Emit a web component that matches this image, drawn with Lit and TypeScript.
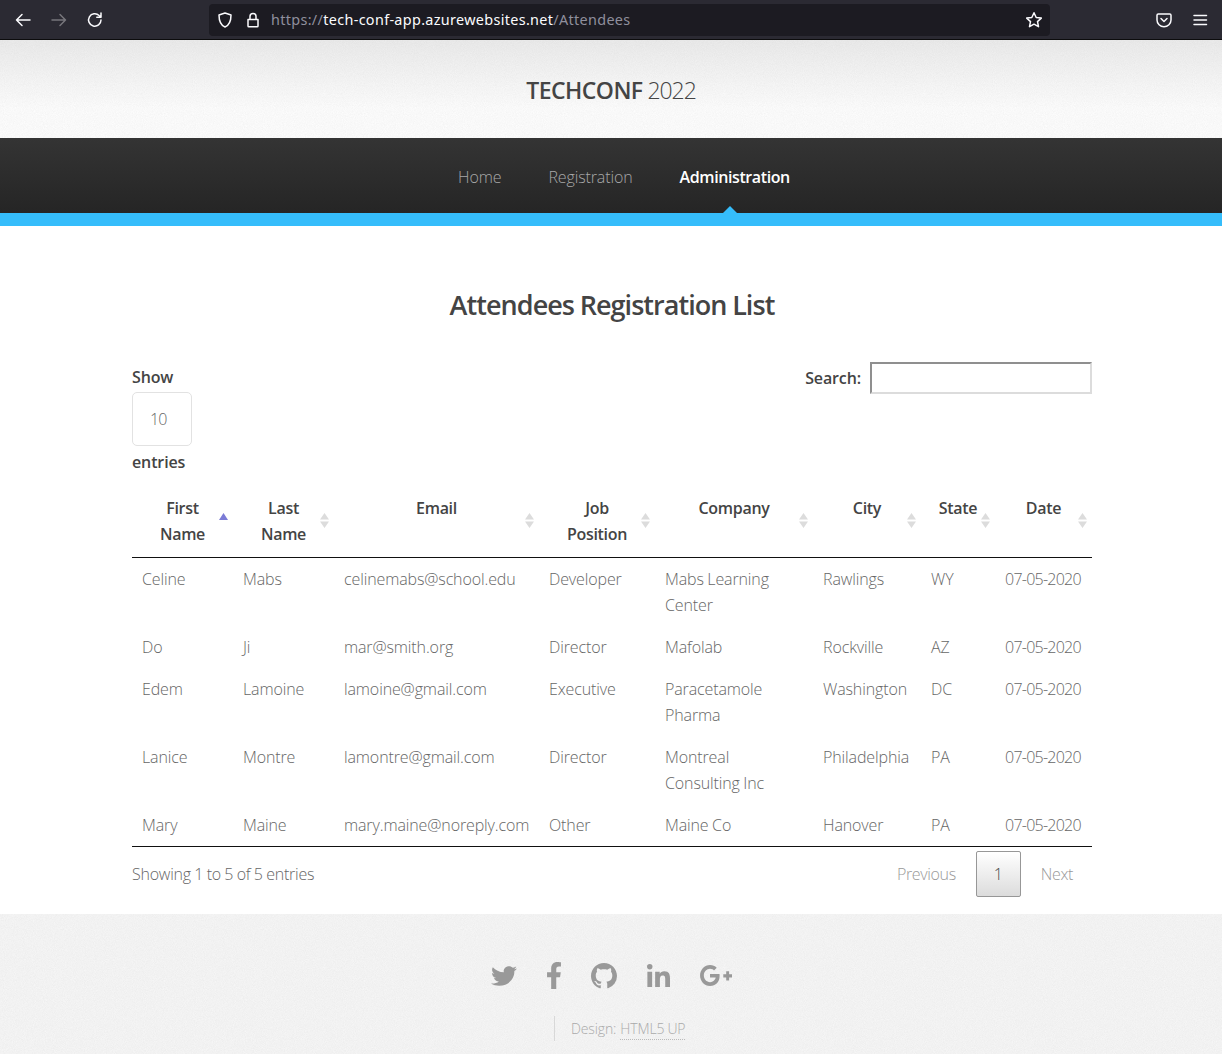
import { LitElement, html, css, svg } from 'lit'
import { customElement } from 'lit/decorators.js'

const noise =
    "url(\"data:image/svg+xml,%3Csvg xmlns='http://www.w3.org/2000/svg' width='200' height='200'%3E%3Cfilter id='n'%3E%3CfeTurbulence type='fractalNoise' baseFrequency='1.1' numOctaves='2' stitchTiles='stitch'/%3E%3CfeColorMatrix values='0 0 0 0 0 0 0 0 0 0 0 0 0 0 0 0 0 0 .05 0'/%3E%3C/filter%3E%3Crect width='200' height='200' filter='url(%23n)'/%3E%3C/svg%3E\")"

const columns = [
    { label: ['First', 'Name'], width: 101, active: true },
    { label: ['Last', 'Name'], width: 101 },
    { label: ['Email'], width: 205 },
    { label: ['Job', 'Position'], width: 116 },
    { label: ['Company'], width: 158 },
    { label: ['City'], width: 108 },
    { label: ['State'], width: 74 },
    { label: ['Date'], width: 97 },
]

const rows = [
    ['Celine', 'Mabs', 'celinemabs@school.edu', 'Developer', 'Mabs Learning Center', 'Rawlings', 'WY', '07-05-2020'],
    ['Do', 'Ji', 'mar@smith.org', 'Director', 'Mafolab', 'Rockville', 'AZ', '07-05-2020'],
    ['Edem', 'Lamoine', 'lamoine@gmail.com', 'Executive', 'Paracetamole Pharma', 'Washington', 'DC', '07-05-2020'],
    ['Lanice', 'Montre', 'lamontre@gmail.com', 'Director', 'Montreal Consulting Inc', 'Philadelphia', 'PA', '07-05-2020'],
    ['Mary', 'Maine', 'mary.maine@noreply.com', 'Other', 'Maine Co', 'Hanover', 'PA', '07-05-2020'],
]

const socials = [
    { w: 26, h: 24, box: '0 0 512 512', d: 'M459.37 151.716c.325 4.548.325 9.097.325 13.645 0 138.72-105.583 298.558-298.558 298.558-59.452 0-114.68-17.219-161.137-47.106 8.447.974 16.568 1.299 25.34 1.299 49.055 0 94.213-16.568 130.274-44.832-46.132-.975-84.792-31.188-98.112-72.772 6.498.974 12.995 1.624 19.818 1.624 9.421 0 18.843-1.3 27.614-3.573-48.081-9.747-84.143-51.98-84.143-102.985v-1.299c13.969 7.797 30.214 12.67 47.431 13.319-28.264-18.843-46.781-51.005-46.781-87.391 0-19.492 5.197-37.36 14.294-52.954 51.655 63.675 129.3 105.258 216.365 109.807-1.624-7.797-2.599-15.918-2.599-24.04 0-57.828 46.782-104.934 104.934-104.934 30.213 0 57.502 12.67 76.67 33.137 23.715-4.548 46.456-13.32 66.599-25.34-7.798 24.366-24.366 44.833-46.132 57.827 21.117-2.273 41.584-8.122 60.426-16.243-14.292 20.791-32.161 39.308-52.628 54.253z' },
    { w: 14, h: 27, box: '22 0 276 512', d: 'M279.14 288l14.22-92.66h-88.91v-60.13c0-25.35 12.42-50.06 52.24-50.06h40.42V6.26S260.43 0 225.36 0c-73.22 0-121.08 44.38-121.08 124.72v70.62H22.89V288h81.39v224h100.17V288z' },
    { w: 26, h: 26, box: '0 0 16 16', d: 'M8 0C3.58 0 0 3.58 0 8c0 3.54 2.29 6.53 5.47 7.59.4.07.55-.17.55-.38 0-.19-.01-.82-.01-1.49-2.01.37-2.53-.49-2.69-.94-.09-.23-.48-.94-.82-1.13-.28-.15-.68-.52-.01-.53.63-.01 1.08.58 1.23.82.72 1.21 1.87.87 2.33.66.07-.52.28-.87.51-1.07-1.78-.2-3.64-.89-3.64-3.95 0-.87.31-1.59.82-2.15-.08-.2-.36-1.02.08-2.12 0 0 .67-.21 2.2.82.64-.18 1.32-.27 2-.27.68 0 1.36.09 2 .27 1.53-1.04 2.2-.82 2.2-.82.44 1.1.16 1.92.08 2.12.51.56.82 1.27.82 2.15 0 3.07-1.87 3.75-3.65 3.95.29.25.54.73.54 1.48 0 1.07-.01 1.93-.01 2.2 0 .21.15.46.55.38A8.013 8.013 0 0016 8c0-4.42-3.58-8-8-8z' },
    { w: 23, h: 23, box: '0 0 448 448', d: 'M100.28 448H7.4V148.9h92.88zM53.79 108.1C24.09 108.1 0 83.5 0 53.8a53.79 53.79 0 0 1 107.58 0c0 29.7-24.1 54.3-53.79 54.3zM447.9 448h-92.68V302.4c0-34.7-.7-79.2-48.29-79.2-48.29 0-55.69 37.7-55.69 76.7V448h-92.78V148.9h89.08v40.8h1.3c12.4-23.5 42.69-48.3 87.88-48.3 94 0 111.28 61.9 111.28 142.3V448z' },
    { w: 32, h: 21, box: '12 64 615 384', d: 'M386.061 228.496c1.834 9.692 3.143 19.384 3.143 31.956C389.204 370.205 315.599 448 204.8 448c-106.084 0-192-85.915-192-192s85.916-192 192-192c51.864 0 95.083 18.859 128.611 50.292l-52.126 50.03c-14.145-13.621-39.028-29.599-76.485-29.599-65.484 0-118.92 54.221-118.92 121.277 0 67.056 53.436 121.277 118.92 121.277 75.961 0 104.513-54.745 108.965-82.773H204.8v-66.009h181.261zm185.406 6.437V179.2h-56.001v55.733h-55.733v56.001h55.733v55.733h56.001v-55.733H627.2v-56.001h-55.733z' },
]

@customElement('browser-bar')
export class BrowserBar extends LitElement {
    static styles = css`
        :host {
            display: flex;
            align-items: center;
            height: 39px;
            background: #2b2a33;
            border-bottom: 1px solid #0c0c0d;
        }

        svg {
            display: block;
            fill: none;
            stroke: #fbfbfe;
            stroke-width: 1.5;
            stroke-linecap: round;
            stroke-linejoin: round;
        }

        .nav {
            display: flex;
            gap: 20px;
            padding-left: 15px;
            width: 209px;
            box-sizing: border-box;
        }

        .dim {
            stroke: #77767c;
        }

        .url {
            display: flex;
            align-items: center;
            width: 841px;
            height: 32px;
            box-sizing: border-box;
            padding: 0 7px 0 8px;
            background: #1c1b22;
            border-radius: 4px;
        }

        .address {
            margin-left: 10px;
            flex: 1;
            font: 400 14.4px 'Noto Sans', sans-serif;
            letter-spacing: 0.33px;
            color: #8f8f9d;
            white-space: nowrap;
        }

        .address b {
            font-weight: 400;
            color: #fbfbfe;
        }

        .lock {
            margin-left: 12px;
        }

        .tools {
            display: flex;
            gap: 20px;
            margin-left: 106px;
        }
    `

    render() {
        return html`
            <div class="nav">
                <svg width="16" height="16" viewBox="0 0 16 16"><path d="M15 8H1.5M7 2.5 1.5 8 7 13.5" /></svg>
                <svg class="dim" width="16" height="16" viewBox="0 0 16 16"><path d="M1 8h13.5M9 2.5 14.5 8 9 13.5" /></svg>
                <svg width="16" height="16" viewBox="0 0 16 16"><path d="M14 8a6.2 6.2 0 1 1-1.9-4.5L14 5.2M14 1v4.2H9.8" /></svg>
            </div>
            <div class="url">
                <svg width="16" height="16" viewBox="0 0 16 16"><path d="M8 1 2 3c0 6 1 10 6 12 5-2 6-6 6-12z" /></svg>
                <svg class="lock" width="16" height="16" viewBox="0 0 16 16"><path d="M3 7.5h10V14a.8.8 0 0 1-.8.8H3.800A.8.8 0 0 1 3 14zM5 7.500V4.400a3 3 0 0 1 6 0v3.100" /></svg>
                <span class="address">https://<b>tech-conf-app.azurewebsites.net</b>/Attendees</span>
                <svg width="18" height="18" viewBox="0 0 18 18"><path d="m9 1.800 2.200 4.700 5.100.6-3.800 3.500 1 5.100L9 13.200l-4.500 2.500 1-5.100-3.800-3.500 5.100-.6z" /></svg>
            </div>
            <div class="tools">
                <svg width="16" height="16" viewBox="0 0 16 16"><path d="M2.300 2h11.400c.7 0 1.300.6 1.300 1.300V8a7 6.800 0 0 1-14 0V3.300C1 2.600 1.600 2 2.300 2zM5 6.500l3 3 3-3" /></svg>
                <svg width="16" height="16" viewBox="0 0 16 16"><path d="M2 3.500h12.500M2 8h12.500M2 12.500h12.500" /></svg>
            </div>
        `
    }
}

@customElement('app-root')
export class AppRoot extends LitElement {
    static styles = css`
        :host {
            display: block;
            width: 1222px;
            height: 1054px;
            overflow: hidden;
            background: #fff;
            font: 300 16px/26px 'Open Sans', sans-serif;
            letter-spacing: -0.12px;
            word-spacing: -0.5px;
            color: #666;
        }

        header {
            height: 98px;
            display: flex;
            align-items: center;
            justify-content: center;
            background: linear-gradient(rgba(0, 0, 0, 0.07), transparent 70%), #fff ${css([noise] as unknown as TemplateStringsArray)};
            font-size: 23px;
            color: #444;
            letter-spacing: -0.65px;
            padding-top: 2px;
            box-sizing: border-box;
        }

        header strong {
            font-weight: 600;
            margin-right: 5px;
            letter-spacing: -0.55px;
        }

        header span {
            letter-spacing: -1.1px;
        }

        nav {
            height: 75px;
            display: flex;
            justify-content: center;
            gap: 47px;
            padding-left: 26px;
            background: linear-gradient(#343434, #252525);
            border-bottom: 13px solid #35bdfb;
        }

        nav a {
            position: relative;
            line-height: 78px;
            color: #a8a8a8;
        }

        nav a.current {
            color: #fff;
            font-weight: 600;
            letter-spacing: -0.4px;
        }

        nav a.current::after {
            content: '';
            position: absolute;
            left: 50%;
            bottom: 0;
            margin-left: -12px;
            border: 7px solid transparent;
            border-top: 0;
            border-bottom-color: #35bdfb;
        }

        main {
            height: 688px;
            box-sizing: border-box;
            padding: 0 130px 0 132px;
        }

        h1 {
            margin: 0;
            padding-top: 58px;
            height: 136px;
            box-sizing: border-box;
            font-size: 27px;
            line-height: 42px;
            font-weight: 600;
            letter-spacing: -0.035em;
            color: #444;
            text-align: center;
        }

        .controls {
            display: flex;
            justify-content: space-between;
            align-items: flex-start;
            height: 123px;
        }

        label {
            font-weight: 600;
            font-size: 16px;
            color: #444;
        }

        .length label {
            display: block;
        }

        .length label:first-child {
            padding-top: 2px;
        }

        .select {
            width: 60px;
            height: 54px;
            box-sizing: border-box;
            margin: 2px 0 3px;
            border: 1px solid #e2e2e2;
            border-radius: 5px;
            padding-left: 17px;
            line-height: 52px;
            color: #666;
            letter-spacing: -0.8px;
        }

        .search {
            display: flex;
            align-items: center;
            gap: 9px;
        }

        .search div {
            width: 222px;
            height: 32px;
            box-sizing: border-box;
            border: 2px solid;
            border-color: #8f8f8f #dcdcdc #dcdcdc #8f8f8f;
        }

        table {
            width: 960px;
            table-layout: fixed;
            border-collapse: collapse;
        }

        th {
            position: relative;
            padding: 10px;
            border-bottom: 1px solid #111;
            font-weight: 600;
            font-size: 16px;
            letter-spacing: -0.3px;
            color: #444;
            text-align: center;
            vertical-align: top;
        }

        th span {
            display: block;
        }

        .sort {
            position: absolute;
            right: 5px;
            top: 28px;
            width: 9px;
            height: 15px;
        }

        td {
            padding: 8px 10px;
            vertical-align: top;
        }

        td:last-child {
            white-space: nowrap;
            letter-spacing: -0.75px;
        }

        tbody {
            border-bottom: 1px solid #111;
        }

        .foot {
            display: flex;
            justify-content: space-between;
            align-items: center;
            padding-top: 4px;
        }

        .count {
            letter-spacing: -0.23px;
        }

        .pages {
            display: flex;
            align-items: center;
            color: #999;
            letter-spacing: -0.35px;
        }

        .pages a {
            padding: 0 20px;
        }

        .pages a:last-child {
            padding-right: 19px;
        }

        .pages .on {
            width: 45px;
            height: 46px;
            box-sizing: border-box;
            padding: 0;
            border: 1px solid #979797;
            border-radius: 2px;
            background: linear-gradient(#fff, #dcdcdc);
            color: #444;
            text-align: center;
            line-height: 44px;
        }

        footer {
            height: 140px;
            box-sizing: border-box;
            padding-top: 48px;
            background: #f8f8f8 ${css([noise] as unknown as TemplateStringsArray)};
        }

        .social {
            display: flex;
            justify-content: center;
            align-items: center;
            gap: 30px;
            height: 27px;
            padding-left: 1px;
        }

        .social svg {
            display: block;
            fill: #999;
        }

        .credit {
            display: flex;
            margin: 27px 0 0 554px;
            height: 25px;
            padding-left: 16px;
            border-left: 1px solid #d8d8d8;
            font-size: 14px;
            line-height: 25px;
            color: #aaa;
        }

        .credit a {
            margin-left: 4px;
            height: 23px;
            border-bottom: 1px dotted #bbb;
        }
    `

    sortIcon(active?: boolean) {
        return html`<svg class="sort" viewBox="0 0 9 15">
            ${active
                ? svg`<path d="M4.500 0 9 7H0z" fill="#7b7bd6" />`
                : svg`<path d="M4.500 0 9 6.500H0zM4.500 15 0 8.500h9z" fill="#dcdcdc" />`}
        </svg>`
    }

    render() {
        return html`
            <browser-bar></browser-bar>
            <header><strong>TECHCONF</strong> <span>2022</span></header>
            <nav>
                <a>Home</a>
                <a>Registration</a>
                <a class="current">Administration</a>
            </nav>
            <main>
                <h1>Attendees Registration List</h1>
                <div class="controls">
                    <div class="length">
                        <label>Show</label>
                        <div class="select">10</div>
                        <label>entries</label>
                    </div>
                    <div class="search">
                        <label>Search:</label>
                        <div></div>
                    </div>
                </div>
                <table>
                    <colgroup>
                        ${columns.map((c) => html`<col style="width:${c.width}px" />`)}
                    </colgroup>
                    <thead>
                        <tr>
                            ${columns.map(
                                (c) => html`<th>
                                    ${c.label.map((l) => html`<span>${l}</span>`)}${this.sortIcon(c.active)}
                                </th>`
                            )}
                        </tr>
                    </thead>
                    <tbody>
                        ${rows.map((r) => html`<tr>${r.map((v) => html`<td>${v}</td>`)}</tr>`)}
                    </tbody>
                </table>
                <div class="foot">
                    <div class="count">Showing 1 to 5 of 5 entries</div>
                    <div class="pages">
                        <a>Previous</a>
                        <a class="on">1</a>
                        <a>Next</a>
                    </div>
                </div>
            </main>
            <footer>
                <div class="social">
                    ${socials.map(
                        (s) => html`<svg width="${s.w}" height="${s.h}" viewBox="${s.box}" preserveAspectRatio="none">
                            <path fill-rule="evenodd" d="${s.d}" />
                        </svg>`
                    )}
                </div>
                <div class="credit">Design: <a>HTML5 UP</a></div>
            </footer>
        `
    }
}
